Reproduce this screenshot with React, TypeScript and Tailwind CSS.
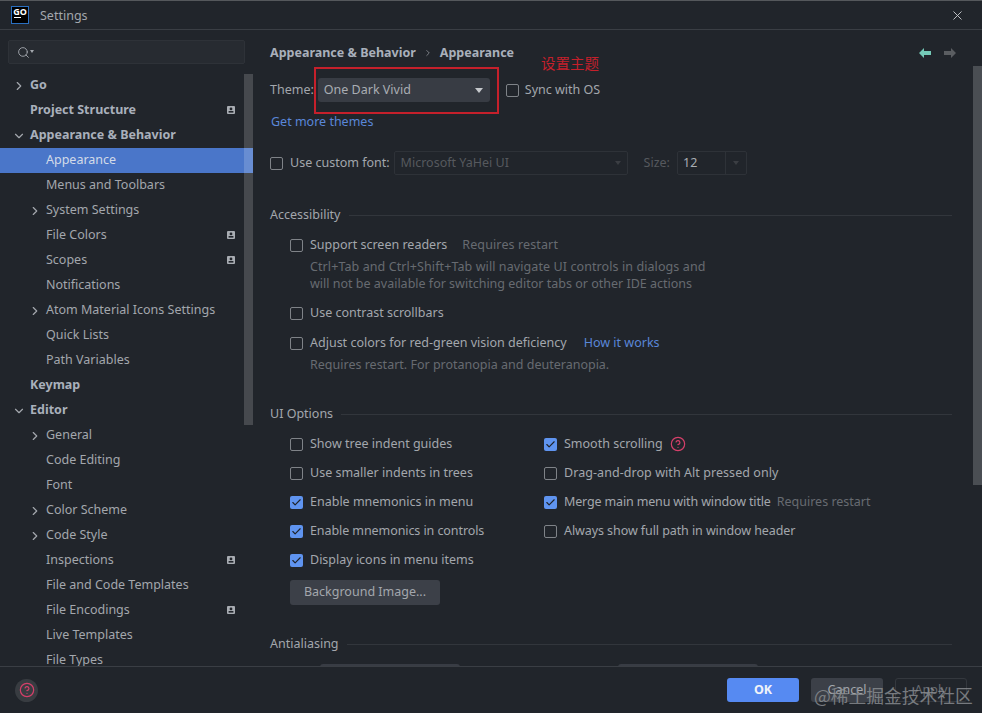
import { ChevronRight, ChevronDown, X, Search, HelpCircle, Check } from 'lucide-react'

type TreeItem = { label: string; level: 0 | 1; bold?: boolean; arrow?: 'right' | 'down'; badge?: boolean; active?: boolean }

const treeItems: TreeItem[] = [
  { label: 'Go', level: 0, bold: true, arrow: 'right' },
  { label: 'Project Structure', level: 0, bold: true, badge: true },
  { label: 'Appearance & Behavior', level: 0, bold: true, arrow: 'down' },
  { label: 'Appearance', level: 1, active: true },
  { label: 'Menus and Toolbars', level: 1 },
  { label: 'System Settings', level: 1, arrow: 'right' },
  { label: 'File Colors', level: 1, badge: true },
  { label: 'Scopes', level: 1, badge: true },
  { label: 'Notifications', level: 1 },
  { label: 'Atom Material Icons Settings', level: 1, arrow: 'right' },
  { label: 'Quick Lists', level: 1 },
  { label: 'Path Variables', level: 1 },
  { label: 'Keymap', level: 0, bold: true },
  { label: 'Editor', level: 0, bold: true, arrow: 'down' },
  { label: 'General', level: 1, arrow: 'right' },
  { label: 'Code Editing', level: 1 },
  { label: 'Font', level: 1 },
  { label: 'Color Scheme', level: 1, arrow: 'right' },
  { label: 'Code Style', level: 1, arrow: 'right' },
  { label: 'Inspections', level: 1, badge: true },
  { label: 'File and Code Templates', level: 1 },
  { label: 'File Encodings', level: 1, badge: true },
  { label: 'Live Templates', level: 1 },
  { label: 'File Types', level: 1 },
]

function Badge() {
  return (
    <svg width="8" height="8" viewBox="0 0 8 8" className="mb-0.5 shrink-0">
      <rect width="8" height="8" rx="1" fill="#a9adb3" />
      <circle cx="4" cy="2.9" r="1.4" fill="#21252b" />
      <rect x="1.6" y="5" width="4.8" height="1.6" fill="#21252b" />
    </svg>
  )
}

function TreeRow({ item }: { item: TreeItem }) {
  return (
    <div className={`flex h-[25px] shrink-0 items-center pr-[18px] ${item.active ? 'bg-[#4a76c9] text-[#d3dbe8]' : ''}`}>
      <div className={`flex items-center ${item.level === 0 ? 'w-[30px] pl-[12px]' : 'w-[46px] pl-[28px]'}`}>
        {item.arrow === 'right' && <ChevronRight size={14} strokeWidth={2} className="text-[#a4a8ae]" />}
        {item.arrow === 'down' && <ChevronDown size={14} strokeWidth={2} className="text-[#a4a8ae]" />}
      </div>
      <span className={`flex-1 whitespace-nowrap ${item.bold ? 'font-bold text-[#a9b0bb]' : ''}`}>{item.label}</span>
      {item.badge && <Badge />}
    </div>
  )
}

function Checkbox({ checked }: { checked?: boolean }) {
  return checked ? (
    <span className="flex h-[13px] w-[13px] shrink-0 items-center justify-center rounded-[2px] bg-[#5f94f0]">
      <Check size={11} strokeWidth={2.5} className="text-[#1f2329]" />
    </span>
  ) : (
    <span className="h-[13px] w-[13px] shrink-0 rounded-[2px] border border-[#7f8388]" />
  )
}

function CheckRow({ label, checked, labelClass, children }: { label: string; checked?: boolean; labelClass?: string; children?: React.ReactNode }) {
  return (
    <div className="flex h-[29px] items-center gap-[7px] whitespace-nowrap">
      <Checkbox checked={checked} />
      <span className={labelClass}>{label}</span>
      {children}
    </div>
  )
}

function SectionTitle({ label }: { label: string }) {
  return (
    <div className="flex h-[20px] items-center gap-2">
      <span>{label}</span>
      <div className="h-px flex-1 bg-[#32363c]" />
    </div>
  )
}

function Hint({ children }: { children: React.ReactNode }) {
  return <div className="h-[17px] leading-[17px] text-[#676b71]">{children}</div>
}

export default function App() {
  return (
    <div className="relative flex h-[713px] w-[982px] flex-col overflow-hidden border-t border-[#55585c] bg-[#21252b] font-['Noto_Sans',sans-serif] text-[12.5px] text-[#a3a7ad]">
      {/* Title bar */}
      <div className="flex h-[29px] shrink-0 items-center border-b border-[#3a3e44] pl-3 pr-[17px]">
        <div className="flex h-4 w-4 flex-col items-center bg-black outline outline-1 outline-[#2a6fc0]">
          <span className="text-[9px] font-bold leading-[10px] text-white">GO</span>
          <span className="mr-1.5 h-px w-[7px] bg-white" />
        </div>
        <span className="ml-3 pt-0.5 text-[#a3a7ad]">Settings</span>
        <X size={15} strokeWidth={1.5} className="ml-auto text-[#c5c8cc]" />
      </div>

      <div className="flex min-h-0 flex-1">
        {/* Sidebar */}
        <div className="relative flex w-[253px] shrink-0 flex-col overflow-hidden">
          <div className="mx-2 mb-[9px] mt-[10px] flex h-6 w-[237px] shrink-0 items-center rounded-[2px] border border-[#2e3238] bg-[#272b31] pl-2">
            <Search size={13} strokeWidth={1.7} className="text-[#a4a8ae]" />
            <span className="mt-[-1px] h-0 w-0 border-x-[2.5px] border-t-[3px] border-x-transparent border-t-[#a4a8ae]" />
          </div>
          {treeItems.map((item) => (
            <TreeRow key={item.label} item={item} />
          ))}
          <div className="absolute right-0 top-[44px] h-[351px] w-[9px] bg-white/[0.17]" />
        </div>

        {/* Main panel */}
        <div className="relative min-w-0 flex-1 overflow-hidden pl-[17px] pr-[30px]">
          <div className="mt-[11px] flex h-[24px] items-center font-bold text-[#a9b0bb]">
            <span>Appearance &amp; Behavior</span>
            <ChevronRight size={10} strokeWidth={2} className="mx-[7px] text-[#8a8e94]" />
            <span>Appearance</span>
            <div className="ml-auto mr-[-4px] flex items-center gap-[13px]">
              <svg width="12" height="10" viewBox="0 0 12 10"><path d="M0 5 5 0v3h7v4H5v3z" fill="#74c9b7" /></svg>
              <svg width="12" height="10" viewBox="0 0 12 10"><path d="M12 5 7 0v3H0v4h7v3z" fill="#5a5d61" /></svg>
            </div>
          </div>

          {/* Theme */}
          <div className="mt-[12px] flex h-[26px] items-center">
            <span>Theme:</span>
            <div className="ml-1 flex h-6 w-[172px] shrink-0 items-center justify-between rounded-[3px] bg-[#383c44] pl-[6px] pr-[7px] text-[#a9adb3]">
              <span>One Dark Vivid</span>
              <span className="h-0 w-0 border-x-[4px] border-t-[5px] border-x-transparent border-t-[#c5c8cc]" />
            </div>
            <div className="ml-4 flex items-center gap-[6px]">
              <Checkbox />
              <span>Sync with OS</span>
            </div>
          </div>
          <div className="mt-[9px] h-[20px] pl-px leading-[20px] text-[#5a87d8]">Get more themes</div>

          {/* Custom font */}
          <div className="mt-[19px] flex h-6 items-center">
            <Checkbox />
            <span className="ml-[7px]">Use custom font:</span>
            <div className="ml-1 flex h-6 w-[234px] items-center justify-between rounded-[2px] border border-[#2e3238] px-[6px] text-[#56595e]">
              <span>Microsoft YaHei UI</span>
              <span className="h-0 w-0 border-x-[3px] border-t-[4px] border-x-transparent border-t-[#3b3e43]" />
            </div>
            <span className="ml-4 text-[#56595e]">Size:</span>
            <div className="ml-[7px] flex h-6 w-[70px] items-center rounded-[2px] border border-[#2e3238]">
              <span className="w-[47px] pl-[5px] text-[#a9adb3]">12</span>
              <span className="flex h-full flex-1 items-center justify-center border-l border-[#2e3238]">
                <span className="h-0 w-0 border-x-[3px] border-t-[4px] border-x-transparent border-t-[#3b3e43]" />
              </span>
            </div>
          </div>

          {/* Accessibility */}
          <div className="mt-[30px]"><SectionTitle label="Accessibility" /></div>
          <div className="mt-[6px] pl-5">
            <CheckRow label="Support screen readers">
              <span className="ml-2 tracking-[0.12px] text-[#676b71]">Requires restart</span>
            </CheckRow>
            <div className="mt-[-2px] pl-5">
              <Hint><span className="tracking-[0.09px]">Ctrl+Tab and Ctrl+Shift+Tab will navigate UI controls in dialogs and</span></Hint>
              <Hint>will not be available for switching editor tabs or other IDE actions</Hint>
            </div>
            <div className="mt-[7px]"><CheckRow label="Use contrast scrollbars" /></div>
            <div className="mt-px">
              <CheckRow label="Adjust colors for red-green vision deficiency">
                <span className="ml-[10px] text-[#5a87d8]">How it works</span>
              </CheckRow>
            </div>
            <div className="mt-[-2px] pl-5"><Hint>Requires restart. For protanopia and deuteranopia.</Hint></div>
          </div>

          {/* UI Options */}
          <div className="mt-[31px]"><SectionTitle label="UI Options" /></div>
          <div className="mt-[6px] flex pl-5">
            <div className="w-[254px]">
              <CheckRow label="Show tree indent guides" />
              <CheckRow label="Use smaller indents in trees" />
              <CheckRow label="Enable mnemonics in menu" checked />
              <CheckRow label="Enable mnemonics in controls" labelClass="tracking-[-0.08px]" checked />
              <CheckRow label="Display icons in menu items" checked />
              <button className="mt-[5px] h-[25px] w-[150px] rounded-[3px] bg-[#3c4048] text-[#a3a7ad]">Background Image...</button>
            </div>
            <div>
              <CheckRow label="Smooth scrolling" checked>
                <HelpCircle size={16} strokeWidth={1.8} className="mb-0.5 text-[#d5406a]" />
              </CheckRow>
              <CheckRow label="Drag-and-drop with Alt pressed only" labelClass="tracking-[0.06px]" />
              <CheckRow label="Merge main menu with window title" labelClass="tracking-[-0.15px]" checked>
                <span className="ml-[-1px] text-[#676b71]">Requires restart</span>
              </CheckRow>
              <CheckRow label="Always show full path in window header" labelClass="tracking-[-0.08px]" />
            </div>
          </div>

          {/* Antialiasing */}
          <div className="mt-[29px]"><SectionTitle label="Antialiasing" /></div>
          <div className="mt-[10px] flex gap-[158px] pl-[50px]">
            <div className="h-6 w-[140px] rounded-[3px] bg-[#383c44]" />
            <div className="h-6 w-[140px] rounded-[3px] bg-[#383c44]" />
          </div>

          {/* Scrollbar */}
          <div className="absolute right-0 top-[36px] h-[419px] w-[9px] bg-[#4a4e53]" />
        </div>
      </div>

      {/* Footer */}
      <div className="flex h-[47px] shrink-0 items-center border-t border-[#3a3e44] px-[15px]">
        <span className="flex h-[23px] w-[23px] items-center justify-center rounded-full bg-[#383c41]">
          <HelpCircle size={16} strokeWidth={1.8} className="text-[#d5406a]" />
        </span>
        <button className="ml-auto h-6 w-[72px] rounded-[3px] bg-[#568af2] font-bold text-[#f0f3f8]">OK</button>
        <button className="ml-3 h-6 w-[72px] rounded-[3px] bg-[#3c4048] text-[#a3a7ad]">Cancel</button>
        <button className="ml-3 h-6 w-[72px] rounded-[3px] border border-[#34383e] text-[#676b71]">Apply</button>
      </div>

      {/* Annotation */}
      <div className="absolute left-[314px] top-[66px] h-[47px] w-[185px] border-2 border-[#c5202b]" />
      <span className="absolute left-[541px] top-[51px] font-['Noto_Sans_CJK_SC',sans-serif] text-[14.5px] text-[#c5202b]">设置主题</span>

      {/* Watermark */}
      <span className="absolute left-[814px] top-[681px] font-['Noto_Sans_CJK_SC',sans-serif] text-[17.75px] text-[#8d9094] opacity-80">@稀土掘金技术社区</span>
    </div>
  )
}
